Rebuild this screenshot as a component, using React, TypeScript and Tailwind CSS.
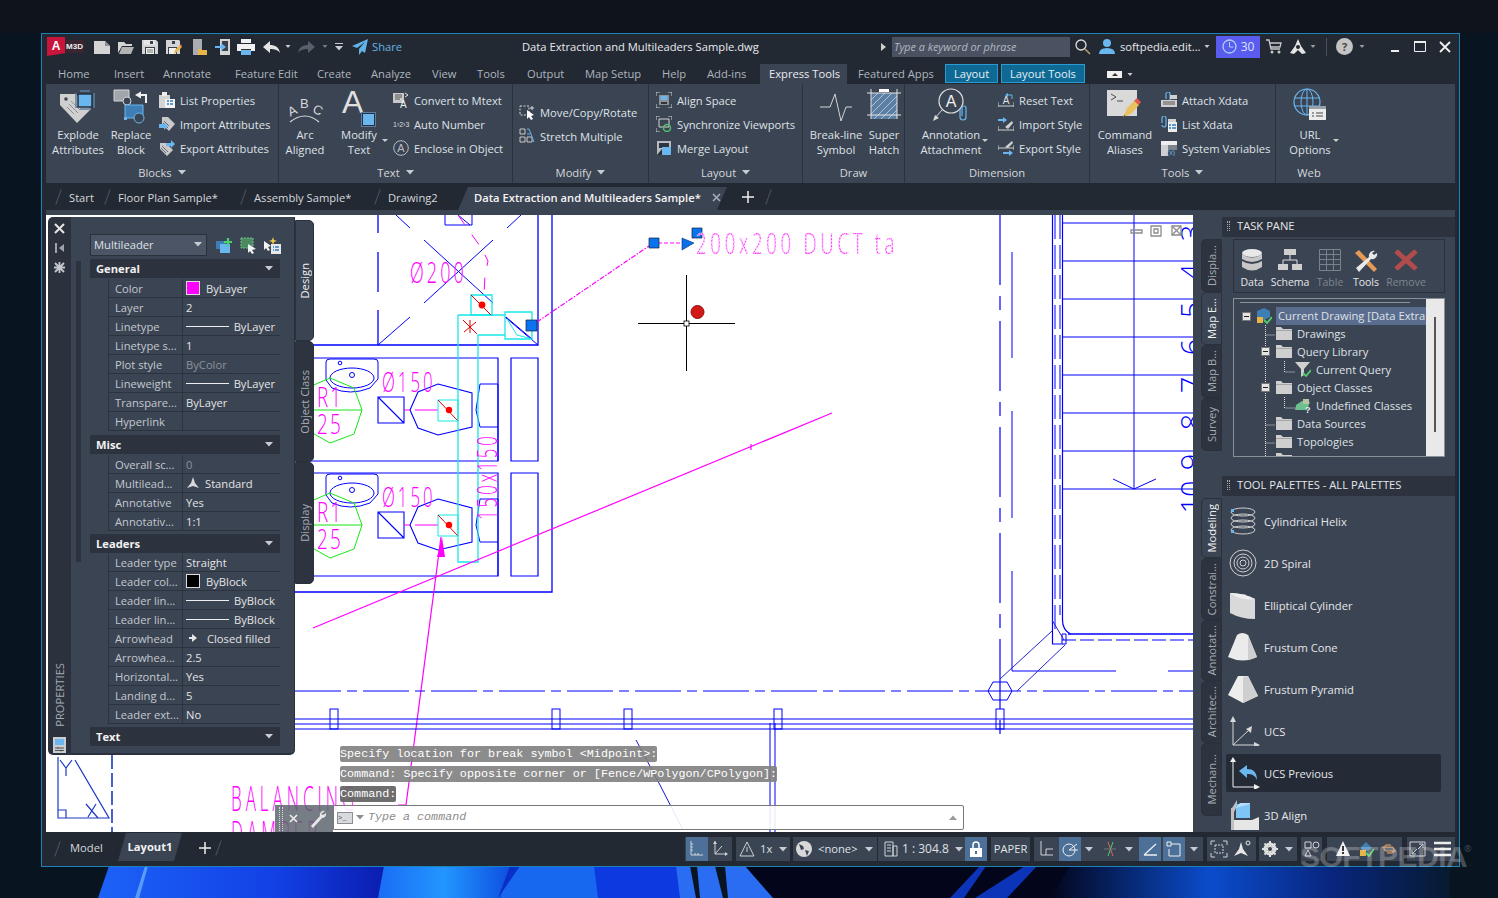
import type { ReactNode } from "react"

const Ic = ({ s = 16, h, children }: { s?: number; h?: number; children: ReactNode }) => (
  <svg width={s} height={h ?? s} viewBox={`0 0 ${s} ${h ?? s}`} className="shrink-0">
    {children}
  </svg>
)

const Caret = ({ c = "#c8ccd2", sm }: { c?: string; sm?: boolean }) => (
  <svg width="8" height="5" viewBox="0 0 8 5" className="shrink-0">
    <path d={sm ? "M1.500 1h5L4 4z" : "M0 0h8L4 4.500z"} fill={c} />
  </svg>
)

const GY = "#d4d4d4"
const BL = "#69b7ee"

/* title bar icons */
const NewIc = () => <Ic><path d="M0 2h11l5 5v8H0z" fill={GY} /><path d="M11 2v5h5" fill="#8b8f96" /></Ic>
const OpenIc = () => <Ic><path d="M0 3h6l2 2h6v2H4L0 14z" fill={GY} /><path d="M4 8h12l-3 7H1z" fill="#b4b4b4" /></Ic>
const SaveIc = () => (
  <Ic>
    <path d="M0 1h14l2 2v12H0z" fill={GY} /><path d="M2 1h11v5H2z" fill="#e6e6e6" /><path d="M8 2h3v3H8z" fill="#3a404b" />
    <path d="M3 8h10v7H3z" fill="#3a404b" /><path d="M4 9h8v6H4z" fill="#f0f0f0" /><path d="M5 11h6M5 13h6" stroke="#777" />
  </Ic>
)
const SaveAsIc = () => (
  <Ic>
    <path d="M0 1h13l1 1v13H0z" fill={GY} /><path d="M6 2h3v3H6z" fill="#3a404b" />
    <path d="M2 8h9v7H2z" fill="#3a404b" /><path d="M3 9h7v6H3z" fill="#f0f0f0" />
    <path d="M8 15l1-4 5-5 2 2-5 5z" fill="#e7b64c" /><path d="M14 6l1-1 1 2-1 1z" fill="#e0584e" />
  </Ic>
)
const SheetIc = () => (
  <Ic><path d="M2 0h9v11H8v5H2z" fill="#a9adb3" /><path d="M7 10h3l1 1h5v5H7z" fill="#e8b548" /></Ic>
)
const ExportIc = () => (
  <Ic><path d="M5 0h10v16H5z" fill={GY} /><path d="M7 2h6v10H7z" fill="#3a404b" /><path d="M0 7h6V4l5 4-5 4V9H0z" fill={BL} /></Ic>
)
const PrintIc = () => (
  <Ic s={18} h={16}>
    <path d="M4 0h10v4H4z" fill="#f0f0f0" /><path d="M0 5h18v7H0z" fill="#f0f0f0" />
    <path d="M4 10h10v6H4z" fill={BL} /><path d="M4 10h10v1H4z" fill="#333" />
  </Ic>
)
const UndoIc = ({ c = "#e4e4e4" }: { c?: string }) => (
  <Ic s={17} h={12}><path d="M7 0v4c5 0 9 2 10 8-2-3-5-4-10-4v4L0 6z" fill={c} /></Ic>
)
const RedoIc = () => (
  <Ic s={17} h={12}><path d="M10 0v4C5 4 1 6 0 12c2-3 5-4 10-4v4l7-6z" fill="#59606c" /></Ic>
)
const ShareIc = () => <Ic><path d="M16 0L0 7l5 2 8-6-6 7v6l3-4 3 2z" fill="#62b3e8" /></Ic>

/* ribbon: large */
const ExplodeIc = () => (
  <Ic s={38}>
    <path d="M1 6h16l15 15-14 14L1 17z" fill="#cfcfcf" />
    <circle cx="7" cy="11" r="1.800" fill="#3b4453" />
    <path d="M12 13l9 9M10 16l9 9M8 19l7 7" stroke="#8d9199" strokeWidth="1" />
    <path d="M19 6h14v13H19z" fill={BL} stroke="#283040" strokeWidth="1.500" />
    <path d="M17 5v15M35 5v15M21 3h10M21 21h10" stroke="#5c7fa1" strokeWidth="1.500" />
  </Ic>
)
const ReplaceIc = () => (
  <Ic s={36}>
    <path d="M1 2h15v11H1z" fill="#a1a5ac" stroke={GY} />
    <circle cx="14" cy="13" r="4" fill="#3b4453" stroke={GY} />
    <path d="M22 7l6-3.500v2.500h6v9h-2V8h-4v2.500z" fill="#f0f0f0" />
    <path d="M12 17h18v13H12z" fill="#3f7eb4" stroke={BL} />
    <circle cx="26" cy="30" r="5" fill="#3b4453" stroke={BL} />
    <path d="M11 29h3v3h-3z" fill={BL} />
  </Ic>
)
const ArcIc = () => (
  <Ic s={36} h={28}>
    <text x="1" y="19" fontSize="13" fill="#d8d8d8" transform="rotate(-25 6 15)" fontFamily="Liberation Sans">A</text>
    <text x="13" y="12" fontSize="13" fill="#d8d8d8" fontFamily="Liberation Sans">B</text>
    <text x="26" y="18" fontSize="13" fill="#d8d8d8" transform="rotate(25 30 14)" fontFamily="Liberation Sans">C</text>
    <path d="M3 26Q18 14 32 26" stroke="#d8d8d8" fill="none" strokeWidth="1.200" />
  </Ic>
)
const ModifyTextIc = () => (
  <div className="relative w-[34px] h-[38px]">
    <span className="absolute left-0 top-[-4px] text-[32px] leading-[36px] text-[#e0e0e0] font-['Liberation_Sans']">A</span>
    <div className="absolute left-[20px] top-[25px] w-[13px] h-[13px] bg-[#69b7ee] border border-[#283040] outline outline-[#5c7fa1]" />
  </div>
)
const BreakLineIc = () => (
  <Ic s={34} h={30}>
    <path d="M1 15h10l5-13 6 27 5-14h6" fill="none" stroke="#d4d4d4" strokeWidth="1" />
  </Ic>
)
const HatchIc = () => (
  <Ic s={34}>
    <path d="M4 5h26v26H4z" fill="#5c7fa1" />
    <path d="M4 12L11 5M4 19L18 5M4 26L25 5M7 31L30 8M14 31L30 15M21 31L30 22" stroke="#a9c6de" strokeWidth="1" />
    <path d="M0 5h34M0 27h34M4 1v30M30 1v30" stroke="#e4e4e4" strokeWidth="1" fill="none" />
    <path d="M12 1h10v3H12z" fill="#fff" />
  </Ic>
)
const AnnotIc = () => (
  <Ic s={36} h={34}>
    <circle cx="18" cy="13" r="12" fill="none" stroke="#e0e0e0" strokeWidth="1.200" />
    <text x="18" y="19" fontSize="16" fill="#f0f0f0" textAnchor="middle" fontFamily="Liberation Sans">A</text>
    <path d="M9 22L2 30" stroke="#d8d8d8" /><path d="M0 33l2-6 4 3z" fill="#d8d8d8" />
    <path d="M27 20v9a3 3 0 0 0 6 0v-9a2 2 0 0 0-4 0v8" fill="none" stroke={BL} strokeWidth="1.200" />
  </Ic>
)
const CmdIc = () => (
  <Ic s={36}>
    <path d="M0 2h30v26H0z" fill="#d9d9d9" />
    <path d="M4 6l5 3-5 3M10 13h6" fill="none" stroke="#4a4f58" strokeWidth="1" />
    <path d="M16 30l4-10 7-7 5 4-7 8z" fill="#e9c25d" /><path d="M27 13l3-3 4 4-2 3z" fill="#e0584e" />
    <path d="M16 30l1-3 3 2z" fill="#444" />
  </Ic>
)
const UrlIc = () => (
  <Ic s={36} h={34}>
    <circle cx="15" cy="14" r="13" fill="none" stroke={BL} strokeWidth="1.200" />
    <ellipse cx="15" cy="14" rx="6" ry="13" fill="none" stroke={BL} />
    <path d="M2 10h26M2 18h26M15 1v26" stroke={BL} strokeWidth="1" />
    <path d="M17 18h17v14H17z" fill="#ececec" /><path d="M17 18h17v3H17z" fill="#9aa0a8" />
    <path d="M20 25h2M24 25h7M20 28h2M24 28h7" stroke="#444" />
  </Ic>
)

/* ribbon: small */
const ListPropIc = () => (
  <Ic>
    <path d="M0 3h11v13H0z" fill={GY} /><path d="M3 0h5v4H3z" fill="#eee" />
    <path d="M6 7h10v9H6z" fill="#f4f4f4" /><path d="M8 9h2M11 9h3M8 12h2M11 12h3" stroke={"#2d7fc4"} strokeWidth="1.400" />
  </Ic>
)
const TagIc = () => <path d="M3 1h6l7 7-6 7-7-7z" fill="#c9c9c9" />
const ImpAttIc = () => (
  <Ic><TagIc /><path d="M5 5l5 5M4 7l5 5" stroke="#6b6f76" /><path d="M0 8h5V6l4 4-4 4v-2H0z" fill={BL} /></Ic>
)
const ExpAttIc = () => (
  <Ic><path d="M1 3h6l7 7-6 6-7-7z" fill="#c9c9c9" /><path d="M3 6l6 6M2 8l5 5" stroke="#6b6f76" /><path d="M7 3h5V0l4 4-4 4V6H7z" fill={BL} /></Ic>
)
const ConvertIc = () => (
  <Ic>
    <path d="M0 1h11v10H0z" fill="#c9c9c9" /><path d="M2 3h7M2 5h7M2 7h5" stroke="#555" />
    <path d="M12 1l3 2-3 2" fill="none" stroke="#ddd" />
    <text x="7" y="16" fontSize="10" fill="#eee" fontFamily="Liberation Sans">A</text>
  </Ic>
)
const AutoNumIc = () => (
  <span className="w-[16px] text-[7px] leading-none text-[#dcdcdc] whitespace-nowrap font-['Liberation_Sans']">1›2›3</span>
)
const EncloseIc = () => (
  <Ic>
    <circle cx="8" cy="8" r="7.300" fill="none" stroke="#b9bdc3" />
    <text x="8" y="12" fontSize="11" textAnchor="middle" fill="#b9bdc3" fontFamily="Liberation Sans">A</text>
  </Ic>
)
const MoveIc = () => (
  <Ic>
    <path d="M1 2h9v9H1z" fill="none" stroke="#d8d8d8" strokeDasharray="2 1.500" />
    <path d="M13 2v4M11 4h4" stroke="#d8d8d8" /><path d="M8 6l7 5-3 1 2 3-2 1-2-3-2 2z" fill="#fff" />
  </Ic>
)
const StretchIc = () => (
  <Ic>
    <path d="M1 1h5v5H1zM1 9h5v5H1zM8 9h5v5H8z" fill="none" stroke="#c9c9c9" />
    <path d="M8 1h2l5 13" fill="none" stroke={BL} /><path d="M8 6h3" stroke={BL} />
  </Ic>
)
const AlignIc = () => (
  <Ic>
    <path d="M0 4V0h4M12 0h4v4M0 12v4h4M12 16h4v-4" fill="none" stroke="#d4d4d4" />
    <path d="M3 3h10v10H3z" fill="#8d929a" /><path d="M5 4h6v4H5z" fill={BL} /><path d="M5 10h6v2H5z" fill="#333" />
  </Ic>
)
const SyncIc = () => (
  <Ic>
    <path d="M0 4V0h4M12 0h4v4M0 12v4h4" fill="none" stroke="#d4d4d4" />
    <path d="M3 3h10v8H3z" fill="none" stroke="#d4d4d4" />
    <circle cx="11" cy="12" r="3.500" fill="none" stroke="#4fbf6b" strokeWidth="1.500" />
  </Ic>
)
const MergeIc = () => (
  <Ic>
    <path d="M1 1h14v14H1z" fill="#b7bbc1" /><path d="M3 3h10v5H3z" fill="#2d3540" />
    <path d="M6 7h9v8H6z" fill={BL} /><path d="M1 15l5-6v6z" fill="#2b2f36" />
  </Ic>
)
const ResetIc = () => (
  <Ic>
    <path d="M0 10v5M16 10v5M0 14h16" stroke="#d0d0d0" fill="none" />
    <text x="8" y="12" fontSize="10" textAnchor="middle" fill="#e0e0e0" fontFamily="Liberation Sans">A</text>
    <path d="M10 3h4v4" fill="none" stroke={BL} /><path d="M10 1l-3 2 3 2z" fill={BL} />
  </Ic>
)
const ImpStyleIc = () => (
  <Ic>
    <path d="M0 10v5M16 10v5M0 14h16" stroke="#d0d0d0" fill="none" />
    <path d="M7 11l7-6 1 2-5 6z" fill="#d0d0d0" />
    <path d="M0 3h5V1l4 3-4 3V5H0z" fill={BL} />
  </Ic>
)
const ExpStyleIc = () => (
  <Ic>
    <path d="M0 5v5M16 5v5M0 8h16" stroke="#d0d0d0" fill="none" />
    <path d="M7 7l7-6 1 2-5 5z" fill="#d0d0d0" />
    <path d="M5 12h6v-2l4 3-4 3v-2H5z" fill={BL} />
  </Ic>
)
const AttachIc = () => (
  <Ic>
    <path d="M5 7V2a2 2 0 0 1 4 0v6" fill="none" stroke={BL} strokeWidth="1.200" />
    <path d="M9 3h7v4H9zM0 8h16v7H0z" fill="#d0d0d0" /><path d="M2 10h12M2 12h12" stroke="#555" />
  </Ic>
)
const ListXIc = () => (
  <Ic>
    <path d="M1 7V2a2 2 0 0 1 4 0v7a2 2 0 0 1-4 0" fill="none" stroke={BL} strokeWidth="1.200" />
    <path d="M7 3h8v3H7z" fill="#d0d0d0" /><path d="M7 6h9v10H7z" fill="#ededed" />
    <path d="M8 9h2M11 9h4M8 12h2M11 12h4" stroke="#2d7fc4" strokeWidth="1.400" />
  </Ic>
)
const SysVarIc = () => (
  <Ic>
    <path d="M0 1h16v4H0z" fill="#eee" /><path d="M0 5h7v11H0z" fill="#cfcfcf" />
    <path d="M7 5h9v5H7z" fill="#7d838c" />
    <text x="6" y="15" fontSize="7" fill={BL} fontFamily="Liberation Sans">(x)</text>
  </Ic>
)

const MG = "#ff00ff"
const BLUE = "#0000ff"

// thin, narrow, spaced-out lettering like the CAD shx font
function Cad({ x, y, size, sx = 0.6, ls = 5, rot, dotted, children }: {
  x: number; y: number; size: number; sx?: number; ls?: number; rot?: number; dotted?: boolean; children: string
}) {
  return (
    <text
      transform={`translate(${x} ${y})${rot ? ` rotate(${rot})` : ""} scale(${sx} 1)`}
      fontSize={size}
      letterSpacing={ls}
      fill={MG}
      stroke={dotted ? "#fff" : "none"}
      strokeWidth={dotted ? 1.100 : 0}
      strokeDasharray={dotted ? "1.500 2" : undefined}
      fontWeight="300"
      fontFamily="Open Sans"
    >
      {children}
    </text>
  )
}

function Drawing() {
  const treads = [223, 261, 299, 337, 375, 413, 451, 489]
  const stairNums = [["3", 233], ["4", 272], ["5", 310], ["6", 347], ["7", 385], ["8", 422], ["9", 462], ["10", 497]] as const
  const wallTicks = [334, 556, 628, 778, 1000]
  const toilet = (dy: number) => (
    <g transform={`translate(0 ${dy})`}>
      <path d="M438 384l34 9v34l-34 8-20-7-8-18 8-18z" fill="none" stroke={BLUE} strokeWidth="1.100" />
      <path d="M378 397h26v26h-26z M378 397l26 26" fill="none" stroke={BLUE} strokeWidth="1.100" />
      <path d="M326 362q0-3 4-3h44q4 0 4 3v17l-8 9q-20 8-38 0l-6-8z" fill="none" stroke={BLUE} strokeWidth="1" />
      <ellipse cx="352" cy="378" rx="22" ry="10" fill="none" stroke={BLUE} />
      <circle cx="352" cy="375" r="2.500" fill="none" stroke={BLUE} /><circle cx="340" cy="363" r="1.800" fill="none" stroke={BLUE} />
      <path d="M330 378l24 10 8 22-8 24-24 9-35-20v-30z" fill="none" stroke="#19e619" />
      <path d="M295 410h67" stroke="#19e619" />
      <path d="M404 410h6M415 410h23" stroke={MG} />
      <path d="M438 400h20v21h-20z" fill="none" stroke="#19e6e6" />
      <path d="M438 400l20 21" stroke="#e00000" /><circle cx="449" cy="410" r="3.200" fill="#ff0000" />
      <path d="M480 384h18v77M480 384l-4 26 4 17h18" fill="none" stroke={BLUE} />
      <path d="M511 358h27v103h-27z" fill="none" stroke={BLUE} strokeWidth="1.200" />
      <path d="M298 358h200v103H298" fill="none" stroke={BLUE} strokeWidth="1.200" />
      <Cad x={317} y={407} size={27} sx={0.7} ls={3}>R1</Cad>
      <Cad x={317} y={434} size={27} sx={0.7} ls={3}>25</Cad>
      <Cad x={382} y={392} size={28} sx={0.6} ls={5}>Ø150</Cad>
    </g>
  )
  return (
    <svg width="1147" height="617" viewBox="46 215 1147 617" className="block">
      <rect x="46" y="215" width="1147" height="617" fill="#fff" />
      {/* ceiling and rooms */}
      <path d="M378 215v18M378 252v40M378 310v35" stroke={BLUE} strokeWidth="1.300" />
      <path d="M295 345h243V215M552 215v377H295" fill="none" stroke={BLUE} strokeWidth="1.300" />
      <path d="M424 303l69-63M424 240l69 63M396 215l14 13M507 228l14-13M378 345l32-28M505 317l33 28" stroke={BLUE} />
      <path d="M445 215v10h27v-10M458 215l12 10" fill="none" stroke={BLUE} />
      {toilet(0)}
      {toilet(115)}
      {/* duct */}
      <path d="M458 315h47M505 335h-27v227h-20V315" fill="none" stroke="#19e6e6" strokeWidth="1.300" />
      <path d="M505 312h27v27h-27z M471 295h21v20h-21z" fill="none" stroke="#19e6e6" strokeWidth="1.300" />
      <path d="M506 317l26 22" stroke={BLUE} /><path d="M507 319l10 16 15 4" fill="none" stroke="#19e6e6" />
      <path d="M471 295l20 20M463 320l14 14M464 332l12-10M470 320v13" stroke="#e00000" />
      <circle cx="482" cy="305" r="3.400" fill="#ff0000" />
      <path d="M458 215l24 34 6 12-3 14-1 20" fill="none" stroke={MG} strokeDasharray="12 12" />
      {/* leaders */}
      <path d="M537 322l112-76" stroke={MG} strokeWidth="1.200" strokeDasharray="5 1.500 1.500 1.500" />
      <path d="M658 243h24" stroke={MG} strokeDasharray="4 2" />
      <path d="M313 628l519-215M751 444v6" fill="none" stroke={MG} strokeWidth="1.200" />
      <path d="M441 537l-35 268h-8" fill="none" stroke={MG} strokeWidth="1.200" />
      <path d="M442 537l3 20h-8z" fill={MG} />
      <path d="M636 740l24 45 23 45" stroke="#1414d8" fill="none" />
      <path d="M682 238l12 5-12 7z" fill="#0a6fe8" stroke="#0b2f6e" strokeWidth=".6" />
      <path d="M649 238h10v10h-10zM692 228h10v10h-10zM526 320h11v11h-11z" fill="#0a74ee" stroke="#123" strokeWidth=".7" />
      <Cad x={696} y={254} size={30} sx={0.62} ls={6} dotted>200x200 DUCT ta</Cad>
      <Cad x={410} y={283} size={29} sx={0.62} ls={5}>Ø200</Cad>
      <Cad x={497} y={520} size={28} sx={0.6} ls={5} rot={-90}>150x150</Cad>
      {/* crosshair */}
      <path d="M638 323.500h97M686.500 275v96" stroke="#000" />
      <rect x="684" y="321" width="5" height="5" fill="#fff" stroke="#000" strokeWidth=".8" />
      <circle cx="697.500" cy="312" r="6.500" fill="#d41818" stroke="#8e1010" />
      {/* grid lines */}
      <path d="M295 691h898" stroke={BLUE} strokeWidth="1.200" strokeDasharray="46 6 10 6" />
      <path d="M1000 215v528" stroke={BLUE} strokeWidth="1.200" strokeDasharray="70 11 14 11" />
      <path d="M1012 252v106M1012 411v107M1012 571v100h104M1168 671h25" fill="none" stroke={BLUE} />
      <path d="M988 691l5-9h14l5 9-5 9h-14z" fill="none" stroke={BLUE} />
      <path d="M295 719h898M295 724h898M295 729h898" stroke={BLUE} />
      {wallTicks.map((x) => (
        <rect key={x} x={x - 4} y="709" width="8" height="20" fill="none" stroke={BLUE} />
      ))}
      <path d="M770 723v109M775 723v109" stroke={BLUE} />
      {/* stair */}
      <path d="M1052.500 215v429M1062.500 215v405q0 10 8 14" fill="none" stroke={BLUE} strokeWidth="1.200" />
      <path d="M1055 215v419M1060 215v400" stroke={BLUE} strokeDasharray="24 6" />
      <path d="M1068 634h125" stroke={BLUE} strokeWidth="1.600" />
      <path d="M1062 640h131" stroke={BLUE} strokeDasharray="14 4" />
      <path d="M1052 644h14v-10h-4v10" fill="none" stroke={BLUE} />
      <path d="M1052 631l-52 48M1065 645l-48 46M1052 620l12 20" stroke="#2626d0" />
      {treads.map((y) => <path key={y} d={`M1062 ${y}h131`} stroke={BLUE} strokeWidth="1.200" />)}
      <path d="M1134 215v274M1113 479l21 10 22-10" fill="none" stroke={BLUE} />
      {stairNums.map(([n, y]) => (
        <text key={n} transform={`translate(1202 ${y}) rotate(-90)`} textAnchor="middle" fontSize="29" fontWeight="300" fill={BLUE} fontFamily="Open Sans">{n}</text>
      ))}
      {/* viewport controls */}
      <path d="M1131 230h11v3h-11z M1151 226h10v10h-10z M1154 229h4v4h-4z M1172 226h9v9h-9z" fill="none" stroke="#8c8c8c" strokeWidth="1.300" />
      <path d="M1172 226l9 9M1181 226l-9 9" stroke="#8c8c8c" strokeWidth="1.300" />
      {/* bottom left detail */}
      <path d="M58 757v61h51l-34-58M58 810h8v8M96 804l-8 13M86 804l12 14M60 760l6 8 6-8M66 768v8" fill="none" stroke="#1c39c4" strokeWidth="1.200" />
      <path d="M112 755v77" stroke="#1c39c4" strokeWidth="1.600" strokeDasharray="14 4" />
      <Cad x={231} y={811} size={34} sx={0.5} ls={8}>BALANCING</Cad>
      <Cad x={231} y={846} size={34} sx={0.5} ls={8}>DAMPER</Cad>
    </svg>
  )
}

function Large({ icon, lines, cls, caret }: { icon: ReactNode; lines: string[]; cls: string; caret?: boolean }) {
  return (
    <div className={`relative flex flex-col items-center shrink-0 ${cls}`}>
      <div className="h-[39px] flex items-start justify-center">{icon}</div>
      {lines.map((l) => (
        <div key={l} className="h-[15px] leading-[15px] whitespace-nowrap">{l}</div>
      ))}
      {caret && <span className="absolute right-[-4px] top-[51px] w-0 h-0 border-x-[3px] border-x-transparent border-t-[3px] border-t-[#ccc]" />}
    </div>
  )
}

function Smalls({ items, cls }: { items: [ReactNode, string][]; cls: string }) {
  return (
    <div className={`flex flex-col shrink-0 ${cls}`}>
      {items.map(([ic, l]) => (
        <div key={l} className="h-[24px] flex items-center gap-[5px] whitespace-nowrap">
          {ic}
          <span>{l}</span>
        </div>
      ))}
    </div>
  )
}

function Panel({ cls, label, caret, children }: { cls: string; label: string; caret?: boolean; children: ReactNode }) {
  return (
    <div className={`flex flex-col h-full border-r border-[#2a313c] shrink-0 ${cls}`}>
      <div className="h-[79px] pt-[4px] flex">{children}</div>
      <div className="flex-1 flex items-center justify-center gap-[6px] pb-[1px] text-[#d5d8dc]">
        {label}
        {caret && <Caret />}
      </div>
    </div>
  )
}

const ribbonTabs = [
  { l: "Home", c: "w-[56px]" }, { l: "Insert", c: "w-[49px]" }, { l: "Annotate", c: "w-[72px]" },
  { l: "Feature Edit", c: "w-[82px]" }, { l: "Create", c: "w-[54px]" }, { l: "Analyze", c: "w-[61px]" },
  { l: "View", c: "w-[45px]" }, { l: "Tools", c: "w-[50px]" }, { l: "Output", c: "w-[58px]" },
  { l: "Map Setup", c: "w-[77px]" }, { l: "Help", c: "w-[45px]" }, { l: "Add-ins", c: "w-[53px]" },
]

type PropRow = [string, ReactNode]
const Line = ({ t }: { t: string }) => (
  <div className="flex items-center w-full pr-[5px]">
    <div className="w-[43px] h-px bg-[#eee] ml-[3px] mr-[5px]" />
    {t}
  </div>
)
const Sw = ({ c, t }: { c: string; t: string }) => (
  <div className="flex items-center pl-[3px]">
    <div className={`w-[14px] h-[14px] border border-[#ddd] mr-[6px] ${c}`} />
    {t}
  </div>
)
const V = ({ t, dim }: { t: string; dim?: boolean }) => <span className={`pl-[3px] ${dim ? "text-[#8c929b]" : ""}`}>{t}</span>

const general: PropRow[] = [
  ["Color", <Sw c="bg-[#ff00ff]" t="ByLayer" />], ["Layer", <V t="2" />], ["Linetype", <Line t="ByLayer" />],
  ["Linetype s...", <V t="1" />], ["Plot style", <V t="ByColor" dim />], ["Lineweight", <Line t="ByLayer" />],
  ["Transpare...", <V t="ByLayer" />], ["Hyperlink", null],
]
const misc: PropRow[] = [
  ["Overall sc...", <V t="0" dim />],
  ["Multilead...", (
    <div className="flex items-center pl-[4px] gap-[6px]">
      <svg width="12" height="12" viewBox="0 0 12 12"><path d="M6 0l2 6 4 5-6-2-6 2 4-5z" fill="#d8d8d8" /></svg>
      Standard
    </div>
  )],
  ["Annotative", <V t="Yes" />], ["Annotativ...", <V t="1:1" />],
]
const leaders: PropRow[] = [
  ["Leader type", <V t="Straight" />], ["Leader col...", <Sw c="bg-black" t="ByBlock" />],
  ["Leader lin...", <Line t="ByBlock" />], ["Leader lin...", <Line t="ByBlock" />],
  ["Arrowhead", (
    <div className="flex items-center pl-[6px] gap-[10px]">
      <svg width="8" height="8" viewBox="0 0 8 8"><path d="M0 3h3V0l5 4-5 4V5H0z" fill="#e6e6e6" /></svg>
      Closed filled
    </div>
  )],
  ["Arrowhea...", <V t="2.5" />], ["Horizontal...", <V t="Yes" />], ["Landing d...", <V t="5" />], ["Leader ext...", <V t="No" />],
]

function PropSection({ title, rows, cls, tight }: { title: string; rows: PropRow[]; cls: string; tight?: boolean }) {
  return (
    <div className={cls}>
      <div className="h-[19px] bg-[#2c333e] flex items-center justify-between pl-[6px] pr-[7px] font-bold text-[#f2f2f2]">
        {title}
        <Caret />
      </div>
      <div className={`ml-[18px] ${tight ? "" : "mt-[1px]"}`}>
        {rows.map(([k, v], i) => (
          <div key={k + i} className="h-[19px] flex items-center border-b border-[#2c333e] border-l">
            <div className="w-[74px] pl-[6px] h-full flex items-center border-r border-[#2c333e] whitespace-nowrap text-[#c3c8cf]">{k}</div>
            <div className="flex-1 flex items-center justify-start text-[#e4e4e4] whitespace-nowrap">{v}</div>
          </div>
        ))}
      </div>
    </div>
  )
}

function SideTab({ t, cls, active }: { t: string; cls: string; active?: boolean }) {
  return (
    <div className={`flex items-center justify-center rounded-l-[5px] border border-[#2a313c] shrink-0 ${cls} ${active ? "bg-[#3b4453] text-[#f0f0f0]" : "bg-[#2d343f] text-[#a6acb5]"}`}>
      <span className="[writing-mode:vertical-rl] rotate-180 whitespace-nowrap">{t}</span>
    </div>
  )
}

function PropertiesPalette() {
  return (
    <div className="absolute left-[2px] top-[2px] flex h-[538px]">
      <div className="w-[23px] bg-[#2c323d] rounded-l-[5px] flex flex-col items-center pt-[6px] pb-[2px]">
        <svg width="11" height="11" viewBox="0 0 11 11"><path d="M1 1l9 9M10 1l-9 9" stroke="#e6e6e6" strokeWidth="2" /></svg>
        <svg className="mt-[9px]" width="9" height="10" viewBox="0 0 9 10"><path d="M0 0h2v10H0zM9 1L4 5l5 4z" fill="#9ea3ab" /></svg>
        <svg className="mt-[9px]" width="11" height="11" viewBox="0 0 11 11"><path d="M1 1l9 9M10 1l-9 9M5.500 0v11M0 5.500h11" stroke="#c4c8ce" strokeWidth="1.800" /></svg>
        <div className="mt-auto [writing-mode:vertical-rl] rotate-180 text-[#a6acb5] whitespace-nowrap mb-[10px]">PROPERTIES</div>
        <svg width="13" height="16" viewBox="0 0 13 16">
          <path d="M0 0h13v16H0z" fill="#c9ccd1" /><path d="M2 2h9v6H2z" fill="#69b7ee" />
          <path d="M2 11h9M2 13.500h9" stroke="#555" /><path d="M5 10v2M8 12.500v2" stroke="#555" />
        </svg>
      </div>
      <div className="relative w-[224px] bg-[#3b4453] rounded-br-[5px] pl-[19px] pt-[17px] border-b-2 border-r border-[#2a313c]">
        <div className="absolute left-[5px] top-[44px] w-[5px] h-[301px] bg-[#2c333e]" />
        <div className="flex items-center">
          <div className="w-[117px] h-[22px] bg-[#4b5566] border border-[#2a313c] flex items-center justify-between pl-[3px] pr-[4px] pb-[1px] text-[#dfe2e6]">
            Multileader
            <Caret />
          </div>
          <svg className="ml-[9px]" width="18" height="17" viewBox="0 0 18 17">
            <path d="M0 4h10v8H0z" fill="#3f7eb4" /><path d="M4 7h10v9H4z" fill="#69b7ee" />
            <path d="M12 1v8M8 5h8" stroke="#4fd06f" strokeWidth="2.200" />
          </svg>
          <svg className="ml-[6px]" width="17" height="17" viewBox="0 0 17 17">
            <path d="M1 1h12v10H1z" fill="#4c8a60" stroke="#6fc48a" strokeDasharray="2 1" /><path d="M8 7l8 5-4 1 2 3-2 1-2-3-2 2z" fill="#f2f2f2" />
          </svg>
          <svg className="ml-[7px]" width="17" height="17" viewBox="0 0 17 17">
            <path d="M0 4l7 5-3 1 2 3-2 1-2-3-2 2z" fill="#f2f2f2" /><path d="M7 7h10v10H7z" fill="#e8e8e8" />
            <path d="M9 10h1M11 10h4M9 13h1M11 13h4" stroke="#2d7fc4" strokeWidth="1.400" /><path d="M9 0l1 3 3 1-3 1-1 3-1-3-3-1 3-1z" fill="#f0c64c" />
          </svg>
        </div>
        <PropSection title="General" rows={general} cls="w-[190px] mt-[3px]" />
        <PropSection title="Misc" rows={misc} cls="w-[190px] mt-[4px]" />
        <PropSection title="Leaders" rows={leaders} cls="w-[190px] mt-[3px]" tight />
        <PropSection title="Text" rows={[]} cls="w-[190px] mt-[3px]" />
      </div>
      <div className="w-[19px] pt-[3px] flex flex-col">
        <SideTab t="Design" cls="w-[19px] h-[121px] rounded-l-none rounded-r-[5px]" active />
        <SideTab t="Object Class" cls="w-[19px] h-[121px] rounded-l-none rounded-r-[5px]" />
        <SideTab t="Display" cls="w-[19px] h-[122px] rounded-l-none rounded-r-[5px]" />
      </div>
    </div>
  )
}

function CommandLine() {
  const hist = [
    { t: "Specify location for break symbol <Midpoint>:", c: "bg-[#808080]/90" },
    { t: "Command: Specify opposite corner or [Fence/WPolygon/CPolygon]:", c: "bg-[#808080]/90" },
    { t: "Command:", c: "bg-[#666666]/95" },
  ]
  return (
    <>
      <div className="absolute left-[294px] top-[531px] flex flex-col items-start gap-[4px] font-['Liberation_Mono'] text-[11.750px] text-white">
        {hist.map((h) => (
          <div key={h.t} className={`h-[16px] leading-[16px] rounded-[2px] whitespace-nowrap ${h.c}`}>{h.t}</div>
        ))}
      </div>
      <div className="absolute left-[229px] top-[590px] flex h-[27px]">
        <div className="w-[58px] bg-[#5f6670]/85 flex items-center pl-[4px] gap-[6px]">
          <div className="w-[4px] h-[24px] border-x border-dotted border-[#ddd]" />
          <svg width="9" height="9" viewBox="0 0 9 9"><path d="M1 1l7 7M8 1L1 8" stroke="#eee" strokeWidth="1.600" /></svg>
          <svg className="ml-[6px]" width="16" height="18" viewBox="0 0 16 18"><path d="M15 1a4 4 0 0 0-5 5L1 16l2 2 9-10a4 4 0 0 0 4-5l-3 2-2-1z" fill="#e8e8e8" /></svg>
        </div>
        <div className="w-[631px] h-[25px] bg-white/90 border border-[#777] rounded-r-[2px] flex items-center pl-[3px] relative">
          <div className="w-[16px] h-[12px] bg-[#d8dade] border border-[#8a8f97] text-[7px] leading-[10px] text-[#444] font-['Liberation_Mono']">&gt;_</div>
          <span className="ml-[3px]"><Caret c="#8a8f97" /></span>
          <span className="ml-[4px] font-['Liberation_Mono'] italic text-[11.700px] text-[#8c8c8c]">Type a command</span>
          <span className="ml-auto mr-[6px] rotate-180"><Caret c="#9a9a9a" /></span>
        </div>
      </div>
    </>
  )
}

function Tree() {
  const Folder = () => <Ic><path d="M0 2h5l2 2h9v11H0z" fill="#cfcfcf" /><path d="M0 5h16v1H0z" fill="#a5a5a5" /></Ic>
  const Minus = () => (
    <div className="w-[9px] h-[9px] bg-[#e4e4e4] border border-[#777] flex items-center justify-center shrink-0">
      <div className="w-[5px] h-px bg-[#222]" />
    </div>
  )
  const rowCls = "h-[18px] flex items-center whitespace-nowrap text-[#dfe2e6]"
  return (
    <div className="relative w-[212px] h-[159px] ml-[11px] mt-[5px] border border-[#8b9098] overflow-hidden">
      <div className="absolute right-0 top-0 bottom-0 w-[18px] bg-[#e9e9e9]">
        <div className="absolute left-[8px] top-[18px] w-[2px] h-[115px] bg-[#555]" />
      </div>
      <svg className="absolute left-0 top-0" width="90" height="160" viewBox="0 0 90 160">
        <path d="M31.500 26v132M31.500 36h10M31.500 54h0M31.500 90h0M31.500 126h10M31.500 144h10" stroke="#ddd" strokeDasharray="1 1" fill="none" />
        <path d="M50.500 62v11h10M50.500 98v11h10" stroke="#ddd" strokeDasharray="1 1" fill="none" />
      </svg>
      <div className="absolute left-[6px] top-[3px] w-[170px] h-px bg-[#8b9098]" />
      <div className="relative pt-[7px]">
        <div className={`${rowCls} pl-[8px] translate-y-[1px]`}>
          <Minus />
          <span className="ml-[5px]">
            <Ic>
              <path d="M1 3l7-3 6 3v6l-6 3-7-3z" fill="#3f7eb4" /><path d="M1 9h6v6H1z" fill="#e8b548" />
              <path d="M8 12l3 3 5-6" fill="none" stroke="#4fd06f" strokeWidth="1.800" />
            </Ic>
          </span>
          <span className="ml-[4px] w-[150px] bg-[#5a6d8e] pl-[2px] h-[18px] leading-[18px] overflow-hidden">Current Drawing [Data Extra</span>
        </div>
        <div className={`${rowCls} pl-[42px] gap-[5px]`}><Folder />Drawings</div>
        <div className={`${rowCls} pl-[27px]`}><Minus /><span className="ml-[6px] mr-[5px]"><Folder /></span>Query Library</div>
        <div className={`${rowCls} pl-[61px] gap-[5px]`}>
          <Ic><path d="M0 1h15L9 8v6l-3 2V8z" fill="#cfcfcf" /><path d="M8 12l3 3 5-6" fill="none" stroke="#4fd06f" strokeWidth="1.800" /></Ic>
          Current Query
        </div>
        <div className={`${rowCls} pl-[27px]`}><Minus /><span className="ml-[6px] mr-[5px]"><Folder /></span>Object Classes</div>
        <div className={`${rowCls} pl-[61px] gap-[5px]`}>
          <Ic><path d="M1 8l6-4 8 1-3 8H0z" fill="#6dbf8f" /><path d="M8 2h6v5H8z" fill="#b7c3a5" /><text x="10" y="16" fontSize="9" fill="#eee" fontWeight="700" fontFamily="Liberation Sans">?</text></Ic>
          Undefined Classes
        </div>
        <div className={`${rowCls} pl-[42px] gap-[5px]`}><Folder />Data Sources</div>
        <div className={`${rowCls} pl-[42px] gap-[5px]`}><Folder />Topologies</div>
        <div className={`${rowCls} pl-[42px] gap-[5px]`}><Folder />Link Templates</div>
      </div>
    </div>
  )
}

function TaskPane() {
  const tools: { ic: ReactNode; t: string; cls: string; dim?: boolean }[] = [
    {
      t: "Data", cls: "w-[36px]",
      ic: <Ic s={22}><ellipse cx="11" cy="4" rx="10" ry="4" fill="#e8e8e8" /><path d="M1 5q10 7 20 0v5q-10 6-20 0zM1 12q10 6 20 0v6q-10 7-20 0z" fill="#c7c7c7" /></Ic>,
    },
    {
      t: "Schema", cls: "w-[40px]",
      ic: <Ic s={24} h={22}><path d="M6 0h12v6H6zM0 15h10v6H0zM14 15h10v6H14z" fill="#cfcfcf" /><path d="M12 6v5M5 15v-4h14v4" fill="none" stroke="#e0e0e0" /></Ic>,
    },
    {
      t: "Table", cls: "w-[40px]", dim: true,
      ic: <Ic s={22}><path d="M.5.5h21v21H.5zM.5 5.500h21M.5 10.500h21M.5 15.500h21M7.500.5v21M14.500.5v21" fill="none" stroke="#7b818b" /></Ic>,
    },
    {
      t: "Tools", cls: "w-[32px]",
      ic: (
        <Ic s={24}>
          <path d="M1 4l4-3 18 19-3 3z" fill="#e59a55" />
          <path d="M21 2a5 5 0 0 0-6 6L2 19l3 4L17 10a5 5 0 0 0 6-6l-3 2-2-2z" fill="#e8e8e8" />
        </Ic>
      ),
    },
    {
      t: "Remove", cls: "w-[48px]", dim: true,
      ic: <Ic s={24} h={22}><path d="M2 2l20 18M22 2L2 20" stroke="#b04c4c" strokeWidth="5" /></Ic>,
    },
  ]
  return (
    <div className="flex h-[255px]">
      <div className="w-[21px] pt-[24px] flex flex-col shrink-0">
        <SideTab t="Displa..." cls="w-[21px] h-[53px]" />
        <SideTab t="Map E..." cls="w-[21px] h-[53px]" active />
        <SideTab t="Map B..." cls="w-[21px] h-[53px]" />
        <SideTab t="Survey" cls="w-[21px] h-[53px]" />
      </div>
      <div className="flex-1 pt-[2px]">
        <div className="h-[20px] bg-[#2c333e] flex items-center pl-[5px] pb-[3px] gap-[7px] text-[#e4e6e9]">
          <div className="w-[3px] h-[10px] border-x border-dotted border-[#aaa]" />
          TASK PANE
        </div>
        <div className="w-[212px] h-[54px] ml-[11px] mt-[2px] border border-[#2a313c] flex pt-[9px]">
          {tools.map((x) => (
            <div key={x.t} className={`flex flex-col items-center shrink-0 ${x.cls} ${x.dim ? "text-[#7f858e]" : "text-[#e4e6e9]"}`}>
              <div className="h-[27px]">{x.ic}</div>
              <span className="text-[10.500px] leading-[13px]">{x.t}</span>
            </div>
          ))}
        </div>
        <Tree />
      </div>
    </div>
  )
}

const paletteItems: { t: string; hi?: boolean; ic: ReactNode }[] = [
  {
    t: "Cylindrical Helix",
    ic: (
      <Ic s={28} h={30}>
        {[6, 12, 18, 24].map((y) => <ellipse key={y} cx="15" cy={y} rx="12" ry="4" fill="none" stroke="#cfcfcf" />)}
        <path d="M3 3h3v3H3zM3 24h3v3H3z" fill="#69b7ee" />
      </Ic>
    ),
  },
  {
    t: "2D Spiral",
    ic: (
      <Ic s={30}>
        <circle cx="15" cy="15" r="13" fill="none" stroke="#cfcfcf" /><circle cx="15" cy="15" r="9" fill="none" stroke="#cfcfcf" />
        <circle cx="15" cy="15" r="6" fill="none" stroke="#cfcfcf" /><circle cx="15" cy="15" r="3" fill="none" stroke="#cfcfcf" />
      </Ic>
    ),
  },
  {
    t: "Elliptical Cylinder",
    ic: <Ic s={28}><path d="M2 2q14 0 25 6v20q-14 0-25-6z" fill="#d9d9d9" /><path d="M2 2q14 0 25 6q-14 2-25-6z" fill="#efefef" /></Ic>,
  },
  {
    t: "Frustum Cone",
    ic: <Ic s={30} h={28}><path d="M9 2q5-4 11 0l9 22q-14 7-29 0z" fill="#ebebeb" /><path d="M20 2l9 22q-4 2-9 3z" fill="#cfcfcf" /></Ic>,
  },
  {
    t: "Frustum Pyramid",
    ic: <Ic s={30} h={28}><path d="M10 1h10l10 20-15 7L0 20z" fill="#ededed" /><path d="M15 2v26l15-7L20 1z" fill="#cfcfcf" /></Ic>,
  },
  {
    t: "UCS",
    ic: (
      <Ic s={32} h={30}>
        <path d="M5 5v24h24M5 29l17-16" stroke="#d8d8d8" fill="none" /><path d="M5 0l3 6H2zM32 29l-6 3v-6zM24 10l-1 7-5-4z" fill="#d8d8d8" />
      </Ic>
    ),
  },
  {
    t: "UCS Previous",
    hi: true,
    ic: (
      <Ic s={32} h={32}>
        <path d="M5 4v26h24" stroke="#f0f0f0" fill="none" /><path d="M5 0l3 5H2zM32 30l-6 3v-6z" fill="#f0f0f0" />
        <path d="M11 14l8-6v4c6 0 10 3 10 11-2-5-5-6-10-6v4z" fill="#69b7ee" />
      </Ic>
    ),
  },
  {
    t: "3D Align",
    ic: (
      <Ic s={32} h={30}>
        <path d="M4 8l5-8v6l-3 6v18H3V8z" fill="#bfbfbf" /><path d="M8 4h14v14H8z" fill="#7fc4f6" /><path d="M8 8l4-5h10v1z" fill="#b4ddfa" />
        <path d="M6 20h18l7-3v13H6z" fill="#e6e6e6" />
      </Ic>
    ),
  },
]

function ToolPalettes() {
  return (
    <div className="flex flex-1 overflow-hidden">
      <div className="w-[21px] pt-[28px] flex flex-col shrink-0">
        <SideTab t="Modeling" cls="w-[21px] h-[60px]" active />
        <SideTab t="Constrai..." cls="w-[21px] h-[62px]" />
        <SideTab t="Annotat..." cls="w-[21px] h-[61px]" />
        <SideTab t="Architec..." cls="w-[21px] h-[62px]" />
        <SideTab t="Mechan..." cls="w-[21px] h-[73px]" />
      </div>
      <div className="flex-1 pt-[6px]">
        <div className="h-[20px] bg-[#2c333e] flex items-center pl-[5px] pb-[3px] gap-[7px] text-[#e4e6e9]">
          <div className="w-[3px] h-[10px] border-x border-dotted border-[#aaa]" />
          TOOL PALETTES - ALL PALETTES
        </div>
        <div className="pl-[4px] pt-[6px]">
          {paletteItems.map((p) => (
            <div key={p.t} className={`w-[215px] h-[38px] mb-[4px] rounded-[2px] flex items-center pl-[2px] text-[#e4e6e9] ${p.hi ? "bg-[#252b36]" : ""}`}>
              <div className="w-[36px] shrink-0">{p.ic}</div>
              {p.t}
            </div>
          ))}
        </div>
      </div>
    </div>
  )
}

const Btn = ({ on, w, children }: { on?: boolean; w: string; children: ReactNode }) => (
  <div className={`h-[24px] flex items-center justify-center shrink-0 ${w} ${on ? "bg-[#4d7098]" : ""}`}>{children}</div>
)

function StatusBar() {
  const st = "#cfd3d8"
  return (
    <div className="h-[34px] flex items-center pl-[4px] pr-[4px] relative">
      <div className="w-[12px] h-[16px] shrink-0 flex justify-end"><div className="w-px h-full bg-[#4a5260] rotate-[20deg]" /></div>
      <div className="w-[60px] pl-[12px] pb-[3px] text-[#d5d8dc]">Model</div>
      <div className="w-[64px] h-[28px] self-end bg-[#3b4453] [clip-path:polygon(8px_0,100%_0,calc(100%-8px)_100%,0_100%)] flex items-center justify-center pb-[1px] font-bold text-[#f2f2f2] mb-[5px]">Layout1</div>
      <div className="ml-[17px] pb-[3px] text-[#eee]">
        <svg width="12" height="12" viewBox="0 0 12 12"><path d="M6 0v12M0 6h12" stroke="#eee" strokeWidth="1.500" /></svg>
      </div>
      <div className="w-px h-[16px] ml-[7px] mb-[3px] bg-[#4a5260] rotate-[20deg]" />

      <div className="ml-auto flex items-center h-[24px] text-[#dfe2e6]">
        <div className="flex bg-[#3b4453] h-full w-[47px] pl-[1px]">
          <Btn on w="w-[22px]"><Ic><path d="M2 0v14h12M2 3h2M2 6h2M2 9h2M6 12v2M9 12v2" stroke={st} fill="none" /></Ic></Btn>
          <Btn w="w-[23px]"><Ic><path d="M3 0v13h12M3 13l7-8" stroke={st} fill="none" /><path d="M3 0l2 3H1zM16 13l-3 2v-4z" fill={st} /></Ic></Btn>
        </div>
        <div className="ml-[4px] flex items-center gap-[3px] bg-[#3b4453] h-full w-[54px] pl-[3px]">
          <Ic><path d="M8 1l7 14H1z M8 6v5" fill="none" stroke={st} /></Ic>
          <span className="ml-[2px] pb-[1px]">1x</span>
          <span className="ml-[4px]"><Caret /></span>
        </div>
        <div className="ml-[3px] flex items-center bg-[#3b4453] h-full w-[84px] pl-[3px]">
          <Ic><circle cx="8" cy="8" r="8" fill="#d8d8d8" /><path d="M3 3l4 2 1 3-3 1zM9 9l4 1-2 5z" fill="#3b4453" /></Ic>
          <span className="ml-[6px] pb-[1px]">&lt;none&gt;</span>
          <span className="ml-[7px]"><Caret /></span>
        </div>
        <div className="ml-px flex items-center bg-[#3b4453] h-full w-[109px] pl-[5px]">
          <Ic><path d="M2 1h8v14H2zM10 5h4v10h-4zM4 4h4M4 7h4M4 10h4" fill="none" stroke={st} /></Ic>
          <span className="ml-[3px] pb-[1px] w-[50px] text-[12px] whitespace-nowrap">1 : 304.8</span>
          <span className="ml-[3px]"><Caret /></span>
          <div className="ml-auto w-[22px] h-full bg-[#4d7098] flex items-center justify-center">
            <svg width="12" height="16" viewBox="0 0 12 16"><path d="M3 7V4a3 3 0 0 1 6 0v3" fill="none" stroke="#fff" strokeWidth="1.500" /><path d="M0 7h12v9H0z" fill="#fff" /><path d="M5 10h2v3H5z" fill="#4d7098" /></svg>
          </div>
        </div>
        <div className="ml-[4px] bg-[#3b4453] h-full w-[39px] pb-[1px] flex items-center justify-center">PAPER</div>
        <div className="ml-[4px] flex items-center bg-[#3b4453] h-full w-[169px] pl-[3px]">
          <Btn w="w-[18px]"><Ic><path d="M3 0v14h12M8 14V8h7" fill="none" stroke={st} /></Ic></Btn>
          <Btn on w="w-[22px] ml-[4px]"><Ic><circle cx="7" cy="9" r="6" fill="none" stroke="#eee" /><path d="M7 9l8-6M7 9h9" stroke="#eee" /></Ic></Btn>
          <span className="ml-[4px]"><Caret /></span>
          <Btn w="w-[14px] ml-[10px]"><Ic><path d="M6 1l5 14" stroke="#e4605a" /><path d="M11 1L6 15" stroke="#4fd06f" /><path d="M2 8l12 0" stroke="#777" /></Ic></Btn>
          <span className="ml-[8px]"><Caret /></span>
          <Btn on w="w-[22px] ml-[6px]"><Ic><path d="M2 14h13M2 14L14 3" stroke="#eee" fill="none" strokeWidth="1.300" /></Ic></Btn>
          <Btn on w="w-[22px] ml-[2px]"><Ic><path d="M5 3h9v12H3V8" fill="none" stroke="#eee" /><path d="M1 1h4v4H1z" fill="none" stroke="#eee" /></Ic></Btn>
          <span className="ml-[5px]"><Caret /></span>
        </div>
        <div className="ml-[4px] flex items-center bg-[#3b4453] h-full w-[49px] pl-[3px] gap-[5px]">
          <Ic s={18}><path d="M1 5V1h4M13 1h4v4M1 13v4h4M13 17h4v-4" fill="none" stroke={st} /><path d="M5 5h8v8H5z" fill="none" stroke={st} strokeDasharray="2 1" /></Ic>
          <Ic s={18}><path d="M8 2l2 7 5 7-7-3-7 3 5-7z" fill="#e6e6e6" /><circle cx="15" cy="3" r="2" fill="none" stroke="#e6e6e6" /></Ic>
        </div>
        <div className="ml-[3px] flex items-center bg-[#3b4453] h-full w-[38px] pl-[3px] gap-[7px]">
          <Ic><circle cx="8" cy="8" r="5" fill="none" stroke="#e0e0e0" strokeWidth="3" /><path d="M8 0v16M0 8h16M2.500 2.500l11 11M13.500 2.500l-11 11" stroke="#e0e0e0" strokeWidth="2" /><circle cx="8" cy="8" r="2" fill="#3b4453" /></Ic>
          <Caret />
        </div>
        <div className="ml-[4px] flex items-center bg-[#3b4453] h-full w-[21px] justify-center">
          <Ic><path d="M1 1h6v6H1zM1 15l3-6 3 6z" fill="none" stroke={st} /><circle cx="12" cy="4" r="3" fill="none" stroke={st} /></Ic>
        </div>
        <div className="ml-[5px] flex items-center bg-[#3b4453] h-full w-[75px] pl-[8px] gap-[7px]">
          <Ic><path d="M8 0l7 15H1z" fill="#f0f0f0" /><path d="M7 5h2v5H7zM7 11h2v2H7z" fill="#333" /></Ic>
          <Ic><path d="M2 7l6-6 6 6-6 4z" fill="#3f7eb4" /><path d="M2 9h6v6H2z" fill="#e8b548" /><path d="M8 12l3 3 5-7" stroke="#4fd06f" strokeWidth="1.800" fill="none" /></Ic>
          <Ic><path d="M1 6h9a3 3 0 0 1 0 6H6M15 10H6a3 3 0 0 1 0-6h4" fill="none" stroke="#b98b63" strokeWidth="1.300" /></Ic>
        </div>
        <div className="ml-[5px] flex items-center bg-[#3b4453] h-full w-[48px] pl-[2px] gap-[8px]">
          <Ic s={17} h={16}><path d="M1 1h15v14H1z M3 13l5-5M3 9v4h4M14 3L9 8M14 7V3h-4" fill="none" stroke={st} /></Ic>
          <Ic s={17} h={16}><path d="M0 2h17M0 8h17M0 14h17" stroke="#eee" strokeWidth="2.500" /></Ic>
        </div>
      </div>
    </div>
  )
}

export default function App() {
  return (
    <div className="relative w-[1498px] h-[898px] overflow-hidden bg-[#081420] font-['Open_Sans',sans-serif] text-[11.200px] leading-[15px] text-[#e0e3e7]">
      <svg className="absolute inset-0" width="1498" height="898" viewBox="0 0 1498 898">
        <defs>
          <linearGradient id="w1" x1="0" y1="0" x2="1" y2="0">
            <stop offset="0" stopColor="#1c62f8" /><stop offset=".6" stopColor="#1240e4" /><stop offset="1" stopColor="#0a18a8" />
          </linearGradient>
          <linearGradient id="w3" x1="0" y1="0" x2="1" y2="0">
            <stop offset="0" stopColor="#1a6cf5" /><stop offset=".5" stopColor="#2296ff" /><stop offset="1" stopColor="#0f4fe0" />
          </linearGradient>
          <linearGradient id="w2" x1="0" y1="0" x2="1" y2="0">
            <stop offset="0" stopColor="#03061c" /><stop offset=".4" stopColor="#0b4ccc" /><stop offset=".7" stopColor="#08267f" /><stop offset="1" stopColor="#071a30" />
          </linearGradient>
        </defs>
        <rect width="1498" height="33" fill="#0f141c" />
        <rect x="740" y="860" width="760" height="38" fill="#03051a" />
        <path d="M1450 860h48v38h-48z" fill="#081420" />
        <path d="M98 898l11-32h290v32z" fill="url(#w1)" />
        <path d="M135 898l10-32h3l-9 32z" fill="#5a9bff" />
        <path d="M378 898l6-32h126l-10 32z" fill="url(#w3)" />
        <path d="M500 898l10-32h88l8 32z" fill="#1768ef" />
        <path d="M498 898l12-32 10 0z" fill="#0a2fc8" />
        <path d="M598 898l-4-32h86l14 32z" fill="#0c3ae0" />
        <path d="M680 898l-4-32h14l6 32zM700 898l-3-32h18l8 32zM728 898l-3-32h20l28 32z" fill="#2a6cf2" />
        <path d="M975 898l50-32h12l-30 32zM950 898l30-32h6l-22 32z" fill="#0c34b8" />
        <path d="M1050 898l20-32h380v32z" fill="url(#w2)" />
      </svg>

      <div className="absolute left-[41px] top-[33px] w-[1419px] h-[834px] border border-[#1c82b8] bg-[#222933] flex flex-col">
        {/* title bar */}
        <div className="h-[30px] pb-[5px] flex items-center shrink-0 relative">
          <div className="ml-[5px] w-[18px] h-[19px] bg-[#c9143c] [clip-path:polygon(0_0,100%_0,100%_85%,0_100%)] flex items-center justify-center font-bold text-[12px] text-white font-['Liberation_Sans']">A</div>
          <div className="w-[19px] h-[13px] bg-[#3a2630] flex items-center justify-center text-[8px] font-bold text-[#eee] font-['Liberation_Sans']">M3D</div>
          <div className="ml-[10px] flex items-center"><NewIc /></div>
          <div className="ml-[8px]"><OpenIc /></div>
          <div className="ml-[8px]"><SaveIc /></div>
          <div className="ml-[8px]"><SaveAsIc /></div>
          <div className="ml-[9px]"><SheetIc /></div>
          <div className="ml-[8px]"><ExportIc /></div>
          <div className="ml-[6px]"><PrintIc /></div>
          <div className="ml-[8px]"><UndoIc /></div>
          <div className="ml-[4px]"><Caret sm /></div>
          <div className="ml-[6px]"><RedoIc /></div>
          <div className="ml-[6px]"><Caret sm c="#737a85" /></div>
          <div className="ml-[6px] flex flex-col gap-[2px] items-center"><div className="w-[8px] h-px bg-[#ccc]" /><Caret /></div>
          <div className="ml-[9px]"><ShareIc /></div>
          <span className="ml-[4px] text-[#66b2e4]">Share</span>
          <span className="absolute left-[480px] text-[#e8eaed] whitespace-nowrap">Data Extraction and Multileaders Sample.dwg</span>
          <div className="absolute left-[839px] w-0 h-0 border-y-[4px] border-y-transparent border-l-[5px] border-l-[#d0d0d0]" />
          <div className="absolute left-[850px] w-[178px] h-[20px] bg-[#4a5262] flex items-center pl-[2px] italic text-[#b3b8c0] text-[10.800px]">Type a keyword or phrase</div>
          <div className="absolute left-[1033px] flex items-center">
            <Ic><circle cx="6" cy="6" r="5" fill="none" stroke="#ddd" strokeWidth="1.300" /><path d="M10 10l5 5" stroke="#b79a72" strokeWidth="1.600" /></Ic>
            <span className="ml-[8px]">
              <Ic><circle cx="8" cy="4" r="4" fill={BL} /><path d="M0 15q0-6 8-6t8 6z" fill={BL} /></Ic>
            </span>
            <span className="ml-[5px] w-[81px] text-[#e8eaed] whitespace-nowrap">softpedia.edit...</span>
            <span className="ml-[2px]"><Caret sm /></span>
            <div className="ml-[5px] w-[44px] h-[22px] bg-[#5a5cf0] flex items-center justify-center gap-[4px] text-[12px] text-[#d8e6ff]">
              <svg width="15" height="15" viewBox="0 0 15 15"><circle cx="7.500" cy="7.500" r="6.500" fill="none" stroke="#a9d2f8" strokeWidth="1.300" /><path d="M7.500 3v5h4" fill="none" stroke="#a9d2f8" /></svg>
              30
            </div>
            <span className="ml-[6px]">
              <Ic><path d="M0 1h3l2 9h9M4 4h11l-1 4H5" fill="none" stroke="#c8c8c8" strokeWidth="1.300" /><circle cx="6" cy="13" r="1.500" fill="#c8c8c8" /><circle cx="13" cy="13" r="1.500" fill="#c8c8c8" /></Ic>
            </span>
            <span className="ml-[8px]">
              <Ic><path d="M8 0l3 7 5 7-4 1-4-4-4 4-4-1 5-7z" fill="#e4e4e4" /><circle cx="8" cy="8" r="2" fill="#222933" /></Ic>
            </span>
            <span className="ml-[3px]"><Caret sm c="#999" /></span>
            <div className="ml-[9px] w-px h-[18px] bg-[#4a5260]" />
            <div className="ml-[9px] w-[17px] h-[17px] rounded-full bg-[#c4c4c4] flex items-center justify-center font-bold text-[11px] text-[#444]">?</div>
            <span className="ml-[5px]"><Caret sm c="#999" /></span>
          </div>
          <div className="absolute left-[1349px] flex items-center">
            <svg width="8" height="10" viewBox="0 0 8 10"><path d="M0 8h8v2H0z" fill="#eee" /></svg>
            <svg className="ml-[15px]" width="12" height="11" viewBox="0 0 12 11"><path d="M.5 1.500h11v9H.5z" fill="none" stroke="#eee" /><path d="M0 0h12v2H0z" fill="#eee" /></svg>
            <svg className="ml-[13px]" width="12" height="12" viewBox="0 0 12 12"><path d="M1 1l10 10M11 1L1 11" stroke="#f0f0f0" strokeWidth="1.800" /></svg>
          </div>
        </div>

        {/* ribbon tabs */}
        <div className="h-[20px] flex shrink-0 pl-[16px] text-[#aeb5bf]">
          {ribbonTabs.map((t) => (
            <div key={t.l} className={`flex items-center pb-[2px] whitespace-nowrap ${t.c}`}>{t.l}</div>
          ))}
          <div className="w-[87px] bg-[#3b4453] flex items-center pb-[2px] pl-[9px] text-[#eaecef]">Express Tools</div>
          <div className="w-[98px] flex items-center pb-[2px] pl-[11px] whitespace-nowrap">Featured Apps</div>
          <div className="w-[53px] h-[19px] bg-[#0e6a94] border border-[#2a9ad0] flex items-center justify-center pb-[1px] text-[#e6eef5]">Layout</div>
          <div className="ml-[3px] w-[84px] h-[19px] bg-[#0e6a94] border border-[#2a9ad0] flex items-center justify-center pb-[1px] text-[#e6eef5]">Layout Tools</div>
          <div className="ml-[22px] flex items-center gap-[2px]">
            <div className="w-[15px] h-[7px] bg-[#f0f0f0] flex items-center justify-center">
              <div className="w-0 h-0 border-x-[3px] border-x-transparent border-b-[3px] border-b-[#333]" />
            </div>
            <span className="ml-[2px]"><Caret sm /></span>
          </div>
        </div>

        {/* ribbon */}
        <div className="h-[99px] mx-[4px] bg-[#3b4453] flex shrink-0 text-[#dfe2e6]">
          <Panel cls="w-[233px]" label="Blocks" caret>
            <Large icon={<ExplodeIc />} lines={["Explode", "Attributes"]} cls="w-[56px] ml-[4px]" />
            <Large icon={<ReplaceIc />} lines={["Replace", "Block"]} cls="w-[50px]" />
            <Smalls cls="ml-[3px]" items={[[<ListPropIc />, "List Properties"], [<ImpAttIc />, "Import Attributes"], [<ExpAttIc />, "Export Attributes"]]} />
          </Panel>
          <Panel cls="w-[234px]" label="Text" caret>
            <Large icon={<div className="pt-[8px]"><ArcIc /></div>} lines={["Arc", "Aligned"]} cls="w-[50px] ml-[1px]" />
            <Large icon={<ModifyTextIc />} lines={["Modify", "Text"]} cls="w-[50px] ml-[4px]" caret />
            <Smalls cls="ml-[9px]" items={[[<ConvertIc />, "Convert to Mtext"], [<AutoNumIc />, "Auto Number"], [<EncloseIc />, "Enclose in Object"]]} />
          </Panel>
          <Panel cls="w-[136px]" label="Modify" caret>
            <Smalls cls="ml-[6px] mt-[12px]" items={[[<MoveIc />, "Move/Copy/Rotate"], [<StretchIc />, "Stretch Multiple"]]} />
          </Panel>
          <Panel cls="w-[154px]" label="Layout" caret>
            <Smalls cls="ml-[7px]" items={[[<AlignIc />, "Align Space"], [<SyncIc />, "Synchronize Viewports"], [<MergeIc />, "Merge Layout"]]} />
          </Panel>
          <Panel cls="w-[102px]" label="Draw">
            <Large icon={<div className="pt-[4px]"><BreakLineIc /></div>} lines={["Break-line", "Symbol"]} cls="w-[60px] ml-[3px]" />
            <Large icon={<HatchIc />} lines={["Super", "Hatch"]} cls="w-[36px]" />
          </Panel>
          <Panel cls="w-[185px]" label="Dimension">
            <Large icon={<AnnotIc />} lines={["Annotation", "Attachment"]} cls="w-[66px] ml-[13px]" caret />
            <Smalls cls="ml-[14px]" items={[[<ResetIc />, "Reset Text"], [<ImpStyleIc />, "Import Style"], [<ExpStyleIc />, "Export Style"]]} />
          </Panel>
          <Panel cls="w-[186px]" label="Tools" caret>
            <Large icon={<CmdIc />} lines={["Command", "Aliases"]} cls="w-[60px] ml-[5px]" />
            <Smalls cls="ml-[6px]" items={[[<AttachIc />, "Attach Xdata"], [<ListXIc />, "List Xdata"], [<SysVarIc />, "System Variables"]]} />
          </Panel>
          <div className="flex flex-col h-full w-[68px] shrink-0">
            <div className="h-[79px] pt-[4px] flex">
              <Large icon={<UrlIc />} lines={["URL", "Options"]} cls="w-[50px] ml-[9px]" caret />
            </div>
            <div className="flex-1 flex items-center justify-center pb-[1px] pr-[2px] text-[#d5d8dc]">Web</div>
          </div>
        </div>

        {/* file tabs */}
        <div className="h-[27px] flex items-center shrink-0 pl-[16px] text-[#d5d8dc] whitespace-nowrap">
          {[
            { l: "Start", c: "w-[49px]" },
            { l: "Floor Plan Sample*", c: "w-[136px]" },
            { l: "Assembly Sample*", c: "w-[134px]" },
            { l: "Drawing2", c: "w-[81px]" },
          ].map((t) => (
            <div key={t.l} className={`flex items-center pt-[1px] ${t.c}`}>
              <div className="w-px h-[16px] bg-[#4a5260] rotate-[20deg]" />
              <span className="ml-[10px]">{t.l}</span>
            </div>
          ))}
          <div className="w-[269px] h-[23px] self-end bg-[#3b4453] [clip-path:polygon(10px_0,100%_0,calc(100%-10px)_100%,0_100%)] flex items-center pl-[16px] pb-[2px] font-semibold text-[#f4f4f4]">
            Data Extraction and Multileaders Sample*
            <svg className="ml-[11px]" width="9" height="9" viewBox="0 0 9 9"><path d="M1 1l7 7M8 1L1 8" stroke="#a6acb5" strokeWidth="1.600" /></svg>
          </div>
          <svg className="ml-[15px]" width="12" height="12" viewBox="0 0 12 12"><path d="M6 0v12M0 6h12" stroke="#eee" strokeWidth="1.500" /></svg>
          <div className="ml-[14px] w-px h-[16px] bg-[#4a5260] rotate-[20deg]" />
        </div>
        <div className="h-[5px] mx-[4px] bg-[#3b4453] shrink-0" />

        {/* canvas and docked palettes */}
        <div className="h-[617px] mx-[4px] flex shrink-0">
          <div className="relative w-[1147px] h-full overflow-hidden">
            <Drawing />
            <PropertiesPalette />
            <CommandLine />
          </div>
          <div className="w-[262px] h-full bg-[#3b4453] pl-[8px] flex flex-col overflow-hidden">
            <TaskPane />
            <ToolPalettes />
          </div>
        </div>

        <StatusBar />
      </div>

      <div className="absolute left-[1300px] top-[837px] text-[30px] leading-[40px] font-bold text-white/25 font-['Liberation_Sans'] tracking-[-0.5px]">SOFTPEDIA</div>
      <div className="absolute left-[1464px] top-[841px] text-[9px] text-white/25">®</div>
    </div>
  )
}
